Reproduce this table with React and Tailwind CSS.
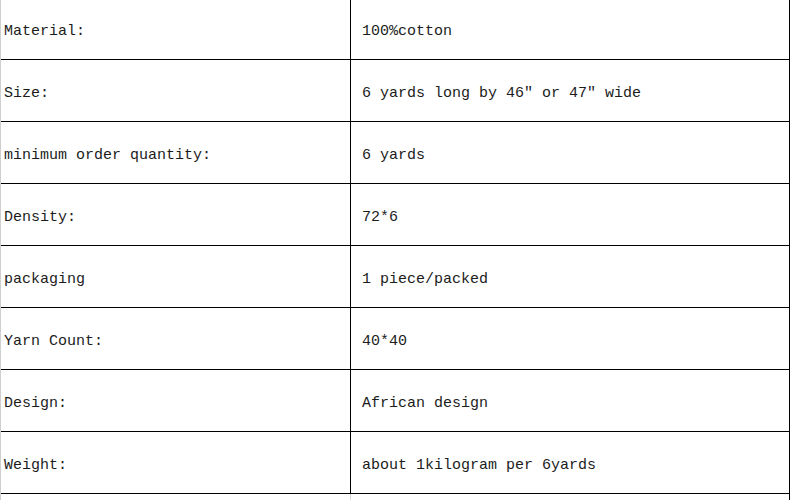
const rows = [
  ["Material:", "100%cotton"],
  ["Size:", "6 yards long by 46″ or 47″ wide"],
  ["minimum order quantity:", "6 yards"],
  ["Density:", "72*6"],
  ["packaging", "1 piece/packed"],
  ["Yarn Count:", "40*40"],
  ["Design:", "African design"],
  ["Weight:", "about 1kilogram per 6yards"],
];

export default function App() {
  return (
    <div className="w-[794px] h-[500px] bg-white overflow-hidden text-[15px] text-[#1c1c1c] font-['Liberation_Mono','Noto_Sans_CJK_SC',monospace]">
      <div className="w-[790px] border-l border-l-[#cfcfcf] border-r border-r-black">
        {rows.map(([label, value], i) => (
          <div
            key={label}
            className={`flex border-b border-black ${i === 0 ? "h-[60px]" : "h-[62px]"}`}
          >
            <div
              className={`w-[350px] border-r border-black flex items-center pl-[3px] ${i === 0 ? "pt-[5px]" : "pt-[7px]"}`}
            >
              {label}
            </div>
            <div
              className={`flex-1 flex items-center pl-[11px] ${i === 0 ? "pt-[5px]" : "pt-[7px]"}`}
            >
              {value}
            </div>
          </div>
        ))}
        <div className="flex h-[10px]">
          <div className="w-[350px] border-r border-[#d8d8d8]"></div>
          <div className="flex-1"></div>
        </div>
      </div>
    </div>
  );
}
